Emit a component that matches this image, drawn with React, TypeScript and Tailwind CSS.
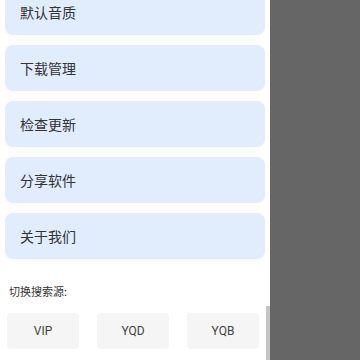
const items = ['默认音质', '下载管理', '检查更新', '分享软件', '关于我们']
const sources = ['VIP', 'YQD', 'YQB']

export default function App() {
  return (
    <div
      className="flex w-[360px] h-[360px] overflow-hidden bg-[#666666]"
      style={{ fontFamily: '"Noto Sans CJK SC", "Noto Sans", sans-serif' }}
    >
      {/* 侧边抽屉 */}
      <div className="relative w-[270px] h-full bg-white shrink-0">
        <div className="flex flex-col gap-[10px] px-[5px] -mt-[11px]">
          {items.map((t) => (
            <div
              key={t}
              className="h-[46px] rounded-[8px] bg-[#e1ecfd] flex items-center pl-[15px] text-[14px] text-[#333333]"
            >
              {t}
            </div>
          ))}
        </div>
        <div className="mt-[24px] pl-[9px] text-[11px] leading-[16px] text-[#333333]">切换搜索源:</div>
        <div className="flex gap-[18px] pl-[7px] mt-[14px]">
          {sources.map((s) => (
            <div
              key={s}
              className="w-[72px] h-[36px] rounded-[4px] bg-[#f5f5f5] flex items-center justify-center text-[12px] text-[#444444]"
              style={{ fontFamily: 'Roboto, "Noto Sans", sans-serif' }}
            >
              {s}
            </div>
          ))}
        </div>
        {/* 滚动条 */}
        <div className="absolute right-0 top-[306px] bottom-0 w-[4px] bg-[#c4c4c4]" />
      </div>
    </div>
  )
}
